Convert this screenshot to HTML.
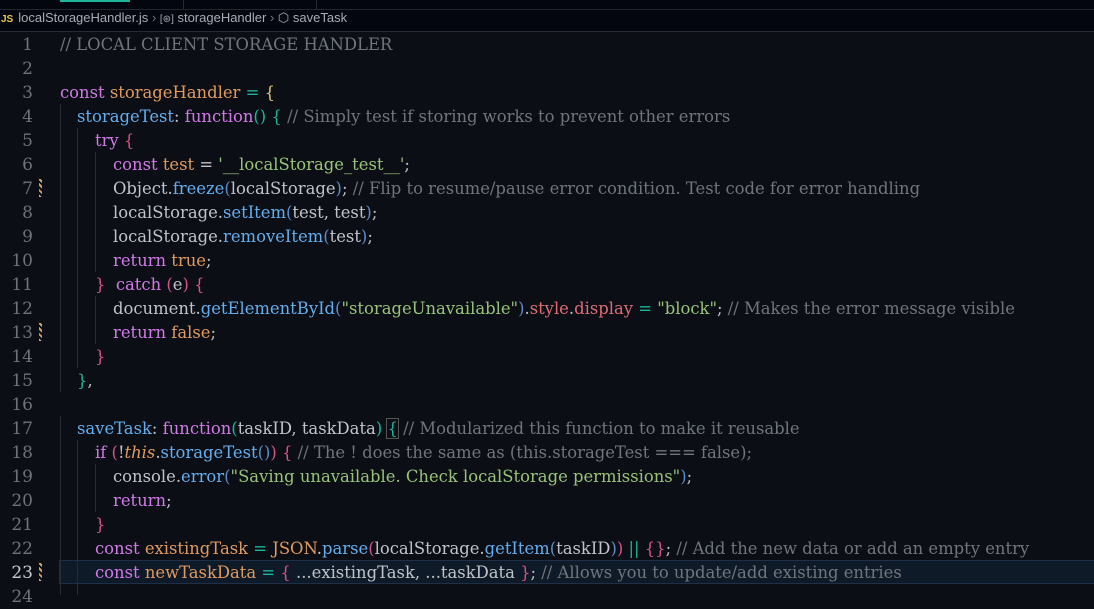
<!DOCTYPE html>
<html><head><meta charset="utf-8"><style>
html,body{margin:0;padding:0;width:1094px;height:595px;overflow:hidden;background:#0b0e15;}
.top{position:absolute;left:0;top:0;width:1094px;height:31px;background:#03060e;border-bottom:1px solid #262a31;}
.tabline{position:absolute;left:0;top:9px;width:1094px;height:1px;background:#22262d;}
.crumb{position:absolute;left:0;top:10px;height:21px;line-height:21px;font:13px "Liberation Sans",sans-serif;color:#a8acb3;white-space:nowrap;}
.js{color:#e8c84a;font-weight:bold;font-size:10px;margin-left:1px;margin-right:5px;}
.code{position:absolute;left:0;top:33px;width:1094px;font-family:"DejaVu Serif",serif;font-size:16.4px;}
.ln{position:absolute;left:0;width:33px;text-align:right;color:#6e7378;height:24px;line-height:24px;font-size:17px;}
.ln.cur{color:#c8ccd0;}
.tx{position:absolute;left:60px;height:24px;line-height:24px;white-space:pre;color:#c0c4ca;}
.c{color:#70757d}.k{color:#d17ae6}.v{color:#e09a5e}.p{color:#61afef}.s{color:#98c379}.r{color:#e06c75}
.y{color:#e5c07b}.g{color:#1bb59a}.m{color:#d7508a}.b{color:#5d8ac7}
.guide{position:absolute;width:1px;background:#272b33;}
.mod{position:absolute;left:39px;width:3px;height:18px;background:repeating-linear-gradient(45deg,#d9a06a 0 2px,#0b0e15 2px 4px);}
.curline{position:absolute;left:59px;top:560px;width:1035px;height:22px;border:1px solid #1e3047;background:#0f1a28;}
</style></head><body>
<div class="top"></div><div class="tabline"></div>
<div style="position:absolute;left:183px;top:0;width:1px;height:9px;background:#262a31"></div>
<div style="position:absolute;left:316px;top:0;width:1px;height:9px;background:#262a31"></div>
<div style="position:absolute;left:60px;top:0;width:70px;height:2px;background:#1bb59a"></div>
<div class="crumb"><span class="js">JS</span>localStorageHandler.js <span style="color:#777">›</span> <span style="font-size:10px">[⊛]</span> storageHandler <span style="color:#777">›</span> ⬡ saveTask</div>
<div class="curline"></div>
<div class="guide" style="left:60px;top:104px;height:288px"></div>
<div class="guide" style="left:77px;top:128px;height:240px"></div>
<div class="guide" style="left:95px;top:152px;height:120px"></div>
<div class="guide" style="left:95px;top:296px;height:48px"></div>
<div class="guide" style="left:60px;top:416px;height:179px"></div>
<div class="guide" style="left:77px;top:440px;height:155px"></div>
<div class="guide" style="left:95px;top:464px;height:48px"></div>
<div class="mod" style="top:179px"></div>
<div class="mod" style="top:323px"></div>
<div class="mod" style="top:563px"></div>
<div class="code">
<div class="ln" style="top:0">1</div><div class="tx" style="top:0"><span class="c">// LOCAL CLIENT STORAGE HANDLER</span></div>
<div class="ln" style="top:24px">2</div>
<div class="ln" style="top:48px">3</div><div class="tx" style="top:48px"><span class="k">const</span> <span class="v">storageHandler</span> <span class="g">=</span> <span class="y">{</span></div>
<div class="ln" style="top:72px">4</div><div class="tx" style="top:72px;left:77px"><span class="p">storageTest</span>: <span class="k">function</span><span class="g">()</span> <span class="g">{</span> <span class="c">// Simply test if storing works to prevent other errors</span></div>
<div class="ln" style="top:96px">5</div><div class="tx" style="top:96px;left:95px"><span class="k">try</span> <span class="m">{</span></div>
<div class="ln" style="top:120px">6</div><div class="tx" style="top:120px;left:113px"><span class="k">const</span> <span class="v">test</span> = <span class="s">'__localStorage_test__'</span>;</div>
<div class="ln" style="top:144px">7</div><div class="tx" style="top:144px;left:113px">Object.<span class="p">freeze</span><span class="b">(</span>localStorage<span class="b">)</span>; <span class="c">// Flip to resume/pause error condition. Test code for error handling</span></div>
<div class="ln" style="top:168px">8</div><div class="tx" style="top:168px;left:113px">localStorage.<span class="p">setItem</span><span class="b">(</span>test, test<span class="b">)</span>;</div>
<div class="ln" style="top:192px">9</div><div class="tx" style="top:192px;left:113px">localStorage.<span class="p">removeItem</span><span class="b">(</span>test<span class="b">)</span>;</div>
<div class="ln" style="top:216px">10</div><div class="tx" style="top:216px;left:113px"><span class="k">return</span> <span class="v">true</span>;</div>
<div class="ln" style="top:240px">11</div><div class="tx" style="top:240px;left:95px"><span class="m">}</span>  <span class="k">catch</span> <span class="m">(</span>e<span class="m">)</span> <span class="m">{</span></div>
<div class="ln" style="top:264px">12</div><div class="tx" style="top:264px;left:113px">document.<span class="p">getElementById</span><span class="b">(</span><span class="s">"storageUnavailable"</span><span class="b">)</span>.<span class="r">style</span>.<span class="r">display</span> <span class="g">=</span> <span class="s">"block"</span>; <span class="c">// Makes the error message visible</span></div>
<div class="ln" style="top:288px">13</div><div class="tx" style="top:288px;left:113px"><span class="k">return</span> <span class="v">false</span>;</div>
<div class="ln" style="top:312px">14</div><div class="tx" style="top:312px;left:95px"><span class="m">}</span></div>
<div class="ln" style="top:336px">15</div><div class="tx" style="top:336px;left:77px"><span class="g">}</span>,</div>
<div class="ln" style="top:360px">16</div>
<div class="ln" style="top:384px">17</div><div class="tx" style="top:384px;left:77px"><span class="p">saveTask</span>: <span class="k">function</span><span class="g">(</span>taskID, taskData<span class="g">)</span> <span class="g" style="outline:1px solid #555">{</span> <span class="c">// Modularized this function to make it reusable</span></div>
<div class="ln" style="top:408px">18</div><div class="tx" style="top:408px;left:95px"><span class="k">if</span> <span class="m">(</span>!<i class="v">this</i>.<span class="p">storageTest</span><span class="b">()</span><span class="m">)</span> <span class="m">{</span> <span class="c">// The ! does the same as (this.storageTest === false);</span></div>
<div class="ln" style="top:432px">19</div><div class="tx" style="top:432px;left:113px">console.<span class="p">error</span><span class="b">(</span><span class="s">"Saving unavailable. Check localStorage permissions"</span><span class="b">)</span>;</div>
<div class="ln" style="top:456px">20</div><div class="tx" style="top:456px;left:113px"><span class="k">return</span>;</div>
<div class="ln" style="top:480px">21</div><div class="tx" style="top:480px;left:95px"><span class="m">}</span></div>
<div class="ln" style="top:504px">22</div><div class="tx" style="top:504px;left:95px"><span class="k">const</span> <span class="v">existingTask</span> <span class="g">=</span> <span class="v">JSON</span>.<span class="p">parse</span><span class="m">(</span>localStorage.<span class="p">getItem</span><span class="b">(</span>taskID<span class="b">)</span><span class="m">)</span> <span class="g">||</span> <span class="m">{}</span>; <span class="c">// Add the new data or add an empty entry</span></div>
<div class="ln cur" style="top:528px">23</div><div class="tx" style="top:528px;left:95px"><span class="k">const</span> <span class="v">newTaskData</span> <span class="g">=</span> <span class="m">{</span> ...existingTask, ...taskData <span class="m">}</span>; <span class="c">// Allows you to update/add existing entries</span></div>
<div class="ln" style="top:552px">24</div>
</div>
</body></html>
